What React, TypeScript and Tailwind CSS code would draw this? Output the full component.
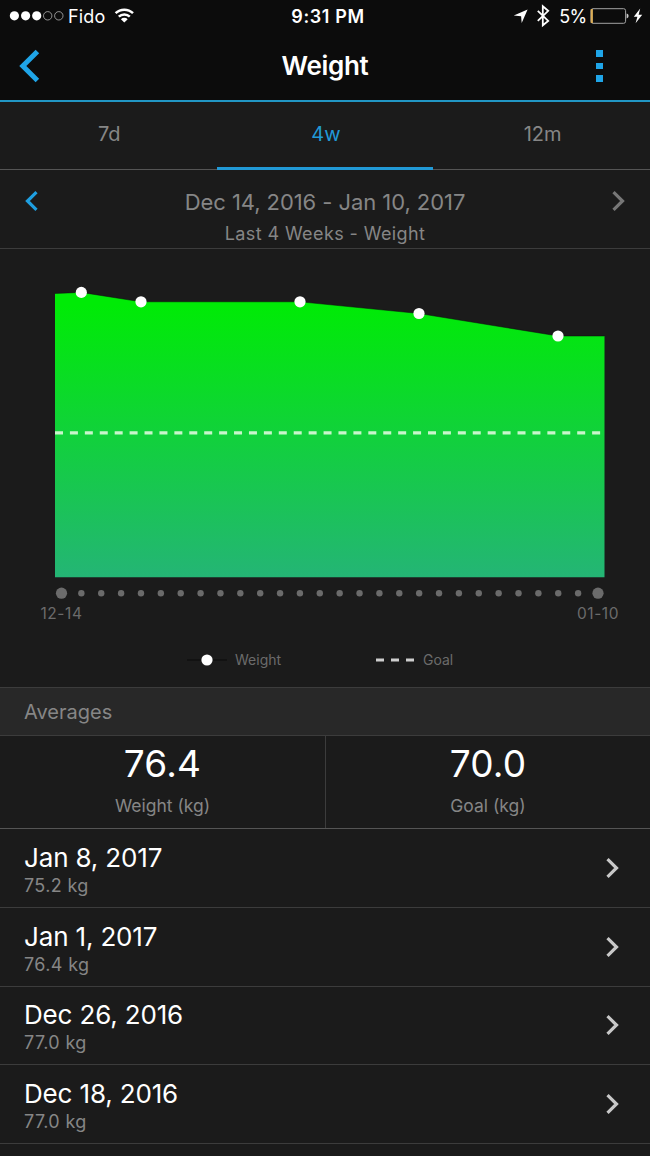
import clsx from 'clsx';

const tabs = ['7d', '4w', '12m'];

const averages = [
  { value: '76.4', label: 'Weight (kg)' },
  { value: '70.0', label: 'Goal (kg)' },
];

const entries = [
  { date: 'Jan 8, 2017', weight: '75.2 kg' },
  { date: 'Jan 1, 2017', weight: '76.4 kg' },
  { date: 'Dec 26, 2016', weight: '77.0 kg' },
  { date: 'Dec 18, 2016', weight: '77.0 kg' },
];

const points = [
  [81.3, 43.4],
  [141, 52.8],
  [300, 52.8],
  [419, 64.5],
  [558, 87],
];

const DAYS = 28;

function Chevron({ left, className }: { left?: boolean; className?: string }) {
  return (
    <svg width="13" height="20" viewBox="0 0 13 20" className={className}>
      <path
        d={left ? 'M11.5 1.2 L2.5 10 L11.5 18.8' : 'M1.5 1.2 L10.5 10 L1.5 18.8'}
        fill="none"
        stroke="currentColor"
        strokeWidth="3.2"
      />
    </svg>
  );
}

function StatusBar() {
  return (
    <div className="grid h-8 grid-cols-3 items-center text-[18px] text-white">
      <div className="flex items-center">
        <svg width="68" height="32" viewBox="0 0 68 32">
          {[14.4, 25.6, 36.7].map((x) => (
            <circle key={x} cx={x} cy="15.8" r="4.6" fill="white" />
          ))}
          {[47.7, 58.8].map((x) => (
            <circle key={x} cx={x} cy="15.8" r="4.2" fill="none" stroke="#b5b5b5" strokeWidth="0.8" />
          ))}
        </svg>
        <span className="w-[40px] tracking-[0.01em]">Fido</span>
        <svg width="30" height="32" viewBox="108 0 30 32" fill="none" stroke="white" strokeWidth="2.5">
          <path d="M115.6 13.2 A12.6 12.6 0 0 1 133 13.2" />
          <path d="M118.8 16.7 A8 8 0 0 1 129.8 16.7" />
          <path d="M124.3 22.6 L120.9 19.2 A4.8 4.8 0 0 1 127.7 19.2 Z" fill="white" stroke="none" />
        </svg>
      </div>
      <div className="pl-[6px] text-center font-semibold tracking-[0.035em]">9:31 PM</div>
      <div className="flex items-center justify-end">
        <svg width="48" height="32" viewBox="510 0 48 32">
          <path d="M527.6 9.6 L521.7 23 L521.1 16.2 L513.8 15.6 Z" fill="white" />
          <path
            d="M537.8 10.9 L548.2 20.9 L542.8 25.3 V6.3 L548.2 10.9 L537.8 20.9"
            fill="none"
            stroke="white"
            strokeWidth="1.8"
          />
        </svg>
        <span className="w-[30px] text-center tracking-[-0.03em]">5%</span>
        <svg width="62" height="32" viewBox="588 0 62 32">
          <rect x="591" y="8.7" width="34.6" height="14.6" rx="2" fill="none" stroke="#a3a3a3" strokeWidth="1" />
          <rect x="590.7" y="9" width="2.2" height="14" fill="#dcae58" />
          <path d="M626.6 13.6 Q628.6 14 628.6 16 Q628.6 18 626.6 18.4 Z" fill="#c9c9c9" />
          <path d="M640.2 8.6 L633.8 16.8 H637.4 L635.6 23.2 L642.2 14.8 H638.6 Z" fill="white" />
        </svg>
      </div>
    </div>
  );
}

function Header() {
  return (
    <header className="h-[102px] border-b-2 border-[#2196c4] bg-[#0c0c0c]">
      <StatusBar />
      <div className="flex h-[68px] items-center justify-between pr-[47px] pl-[19px]">
        <svg width="22" height="34" viewBox="0 0 22 34">
          <path d="M18.4 2.4 L3.8 17 L18.4 31.6" fill="none" stroke="#1fa5e8" strokeWidth="5" />
        </svg>
        <h1 className="pr-px pb-[2px] pl-[14px] text-[26px] font-semibold tracking-[-0.012em] text-white">Weight</h1>
        <div className="flex flex-col gap-[6px]">
          <span className="h-[6.6px] w-[7px] bg-[#1fa5e8]" />
          <span className="h-[6.6px] w-[7px] bg-[#1fa5e8]" />
          <span className="h-[6.6px] w-[7px] bg-[#1fa5e8]" />
        </div>
      </div>
    </header>
  );
}

function WeightChart() {
  const top = `M55 44.5 ${points.map(([x, y]) => `L${x} ${y}`).join(' ')} L604.5 87`;

  return (
    <svg width="650" height="438" viewBox="0 0 650 438" className="block">
      <defs>
        <linearGradient id="area" gradientUnits="userSpaceOnUse" x1="0" y1="56" x2="0" y2="328">
          <stop offset="0" stopColor="#00eb06" />
          <stop offset="1" stopColor="#24b575" />
        </linearGradient>
      </defs>
      <path d={`${top} V328.3 H55 Z`} fill="url(#area)" />
      <path d={top} fill="none" stroke="#0b0b0b" strokeOpacity="0.6" strokeWidth="0.8" />
      <path d="M55 183.8 H600.5" stroke="#c9f5cc" strokeWidth="3.2" strokeDasharray="8 6.92" />
      {points.map(([x, y]) => (
        <circle key={x} cx={x} cy={y} r="5.6" fill="white" />
      ))}

      {Array.from({ length: DAYS }, (_, i) => (
        <circle
          key={i}
          cx={61.5 + i * 19.87}
          cy="344.2"
          r={i === 0 || i === DAYS - 1 ? 5.6 : 3.2}
          fill="#6b6b6b"
        />
      ))}
      <g fill="#6b6b6b" fontSize="15.5" textAnchor="middle" letterSpacing="0.55">
        <text x="61.5" y="370">12-14</text>
        <text x="598" y="370">01-10</text>
      </g>

      <path d="M187 411 H227" stroke="#0b0b0b" strokeWidth="1.2" />
      <circle cx="207" cy="411" r="5.6" fill="white" />
      <path d="M376 411 H414" stroke="#cfcfcf" strokeWidth="3.2" strokeDasharray="8 7" />
      <g fill="#6b6b6b" fontSize="14">
        <text x="235" y="416">Weight</text>
        <text x="423" y="416">Goal</text>
      </g>
    </svg>
  );
}

export default function App() {
  return (
    <div className="h-[1156px] w-[650px] overflow-hidden bg-[#1b1b1b] font-[Inter,sans-serif] text-[#868686]">
      <Header />

      <nav className="grid h-[68px] grid-cols-3 border-b border-[#555]">
        {tabs.map((tab) => (
          <button
            key={tab}
            className={clsx(
              'mb-[-1px] pl-[2px] text-center text-[20px]',
              tab === '4w' ? 'border-b-[3px] border-[#2199d6] pb-[2px] text-[#2199d6]' : 'pb-[5px]'
            )}
          >
            {tab}
          </button>
        ))}
      </nav>

      <section className="flex h-[79px] items-start justify-between border-b border-[#3c3c3c] px-[25px] pt-[16px]">
        <Chevron left className="mt-[5px] text-[#1f9fe0]" />
        <div className="text-center">
          <div className="text-[22px] leading-[32px] tracking-[-0.003em]">Dec 14, 2016 - Jan 10, 2017</div>
          <div className="text-[18px] leading-[31px] tracking-[0.022em]">Last 4 Weeks - Weight</div>
        </div>
        <Chevron className="mt-[5px] text-[#777]" />
      </section>

      <WeightChart />

      <h2 className="h-[49px] border-y border-[#3c3c3c] bg-[#282828] pl-[24px] text-[20px] leading-[48px]">
        Averages
      </h2>

      <section className="grid h-[93px] grid-cols-[326px_324px] border-b border-[#555]">
        {averages.map(({ value, label }, i) => (
          <div key={label} className={clsx('text-center', i === 0 && 'border-r border-[#3c3c3c]')}>
            <div className="text-[37px] leading-[56px] tracking-[0.005em] text-white">{value}</div>
            <div className="text-[17.5px] leading-[28px]">{label}</div>
          </div>
        ))}
      </section>

      <ul>
        {entries.map(({ date, weight }) => (
          <li
            key={date}
            className="flex h-[78.75px] items-center justify-between border-b border-[#3c3c3c] pr-[31px] pl-[24px]"
          >
            <div className="pt-[5px]">
              <div className="text-[26px] leading-[30px] tracking-[-0.006em] text-white">{date}</div>
              <div className="text-[18px] leading-[25px] tracking-[0.02em]">{weight}</div>
            </div>
            <Chevron className="text-[#c8c8c8]" />
          </li>
        ))}
      </ul>
    </div>
  );
}
